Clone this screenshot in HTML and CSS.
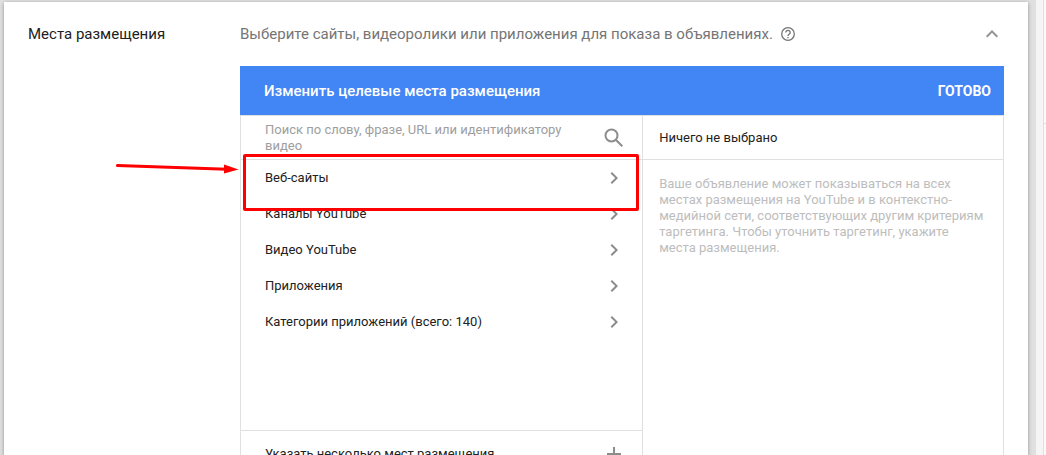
FILE: index.html
```html
<!DOCTYPE html>
<html lang="ru">
	<head>
		<meta charset="UTF-8">
		<title>Места размещения</title>
		<link rel="stylesheet" href="styles.css">
	</head>
	<body>
		<main class="card">
			<h1 class="section-title">Места размещения</h1>
			<div class="section">
				<div class="intro">
					<p class="intro-text">Выберите сайты, видеоролики или приложения для показа в объявлениях.</p>
					<button class="icon-button" aria-label="Справка">
						<svg width="16" height="16" viewBox="0 0 16 16" fill="none" stroke="#757575" stroke-width="1.3">
							<circle cx="8" cy="8" r="6.3"/>
							<path d="M5.8 6.5a2.2 2.1 0 1 1 3.4 1.7C8.4 8.800 8 9 8 10M8 10.900v1.300"/>
						</svg>
					</button>
					<button class="icon-button collapse" aria-label="Свернуть">
						<svg width="24" height="24" viewBox="0 0 24 24" fill="#919191">
							<path d="M12 8l-6 6 1.410 1.410L12 10.830l4.590 4.580L18 14z"/>
						</svg>
					</button>
				</div>
				<div class="panel">
					<header class="panel-header">
						<h2 class="panel-title">Изменить целевые места размещения</h2>
						<button class="done">ГОТОВО</button>
					</header>
					<div class="columns">
						<div class="picker">
							<div class="search">
								<textarea class="search-input" rows="2" aria-label="Поиск" placeholder="Поиск по слову, фразе, URL или идентификатору видео"></textarea>
								<button class="icon-button" aria-label="Найти">
									<svg width="24" height="24" viewBox="0 0 24 24" fill="none" stroke="#8c8c8c" stroke-width="2">
										<circle cx="9.500" cy="9.500" r="6"/>
										<path d="M14 14l6.300 6.300"/>
									</svg>
								</button>
							</div>
							<ul class="list">
								<li><button class="row">Веб-сайты <svg class="chevron" viewBox="0 0 24 24"><path d="M10 6L8.590 7.410 13.170 12l-4.580 4.590L10 18l6-6z"/></svg></button></li>
								<li><button class="row">Каналы YouTube <svg class="chevron" viewBox="0 0 24 24"><path d="M10 6L8.590 7.410 13.170 12l-4.580 4.590L10 18l6-6z"/></svg></button></li>
								<li><button class="row">Видео YouTube <svg class="chevron" viewBox="0 0 24 24"><path d="M10 6L8.590 7.410 13.170 12l-4.580 4.590L10 18l6-6z"/></svg></button></li>
								<li><button class="row">Приложения <svg class="chevron" viewBox="0 0 24 24"><path d="M10 6L8.590 7.410 13.170 12l-4.580 4.590L10 18l6-6z"/></svg></button></li>
								<li><button class="row">Категории приложений (всего: 140) <svg class="chevron" viewBox="0 0 24 24"><path d="M10 6L8.590 7.410 13.170 12l-4.580 4.590L10 18l6-6z"/></svg></button></li>
							</ul>
							<button class="row add">Указать несколько мест размещения <svg class="chevron" viewBox="0 0 24 24"><path d="M19 13h-6v6h-2v-6H5v-2h6V5h2v6h6z"/></svg></button>
							<div class="highlight"></div>
							<svg class="arrow" width="124" height="16" viewBox="0 0 124 16">
								<path d="M2.500 5.500L112 9.300" stroke="#f00" stroke-width="3" stroke-linecap="round"/>
								<path d="M109 4.500L123.500 9.500 109 13.500z" fill="#f00"/>
							</svg>
						</div>
						<div class="selected">
							<h3 class="selected-title">Ничего не выбрано</h3>
							<p class="hint">Ваше объявление может показываться на всех местах размещения на YouTube и в контекстно-медийной сети, соответствующих другим критериям таргетинга. Чтобы уточнить таргетинг, укажите места размещения.</p>
						</div>
					</div>
				</div>
			</div>
		</main>
		<aside class="side">
			<div class="side-panel">
				<div class="side-head"></div>
			</div>
		</aside>
	</body>
</html>
```
FILE: styles.css
```css
* {
	box-sizing: border-box;
}

body {
	display: flex;
	height: 100vh;
	margin: 0;
	overflow: hidden;
	background-color: #e0e0e0;
	font-family: Roboto, "Liberation Sans", sans-serif;
	font-size: 13px;
	line-height: 16px;
	color: #212121;
}

h1, h2, h3, p, ul {
	margin: 0;
	padding: 0;
}

button {
	padding: 0;
	border: 0;
	background: none;
	font: inherit;
	color: inherit;
	cursor: pointer;
}

svg {
	display: block;
}

.card {
	display: flex;
	flex: 1;
	min-height: 100vh;
	margin: 2px 8px 0 4px;
	padding: 20px 24px;
	background-color: white;
	box-shadow: 0 1px 4px rgba(0, 0, 0, 0.35);
}

.section-title {
	width: 212px;
	font-size: 15px;
	font-weight: 400;
	line-height: 24px;
}

.section {
	flex: 1;
}

.intro {
	display: flex;
	align-items: center;
	gap: 7px;
	height: 24px;
	margin-bottom: 20px;
}

.intro-text {
	font-size: 15px;
	color: #757575;
}

.collapse {
	margin-left: auto;
}

.panel-header {
	display: flex;
	align-items: center;
	justify-content: space-between;
	height: 49px;
	padding: 0 13px 0 24px;
	background-color: #4285f4;
	color: white;
}

.panel-title {
	font-size: 15px;
	font-weight: 500;
}

.done {
	font-size: 14px;
	font-weight: 700;
}

.columns {
	display: grid;
	grid-template-columns: 19fr 17fr;
	border: 1px solid #e0e0e0;
}

.picker {
	position: relative;
	border-right: 1px solid #e0e0e0;
}

.search {
	display: flex;
	align-items: center;
	justify-content: space-between;
	height: 44px;
	padding: 0 16px 0 24px;
	border-bottom: 1px solid #e0e0e0;
}

.search-input {
	width: 310px;
	height: 32px;
	padding: 0;
	border: 0;
	outline: 0;
	resize: none;
	overflow: hidden;
	background: none;
	font: inherit;
}

.search-input::placeholder {
	color: #9e9e9e;
}

.list {
	min-height: 270px;
	list-style-type: none;
}

.row {
	display: flex;
	align-items: center;
	justify-content: space-between;
	width: 100%;
	height: 36px;
	padding: 0 16px 0 24px;
}

.chevron {
	width: 24px;
	height: 24px;
	fill: #8c8c8c;
}

.add {
	height: 46px;
	border-top: 1px solid #e0e0e0;
}

.highlight {
	position: absolute;
	top: 38px;
	left: 2px;
	right: 3px;
	height: 57px;
	border: 3px solid #f00;
	border-radius: 2px;
	pointer-events: none;
}

.arrow {
	position: absolute;
	top: 44px;
	left: -126px;
}

.selected-title {
	padding: 14px 16px 13px;
	border-bottom: 1px solid #e0e0e0;
	font-size: 13px;
	font-weight: 400;
}

.hint {
	padding: 16px;
	color: #bdbdbd;
}

.side {
	display: flex;
	width: 10px;
	padding-left: 7px;
	background-color: #f5f5f5;
}

.side-panel {
	flex: 1;
	border-left: 1px solid #e0e0e0;
	background-color: #fafafa;
}

.side-head {
	height: 124px;
	border-bottom: 1px solid #e0e0e0;
}
```
